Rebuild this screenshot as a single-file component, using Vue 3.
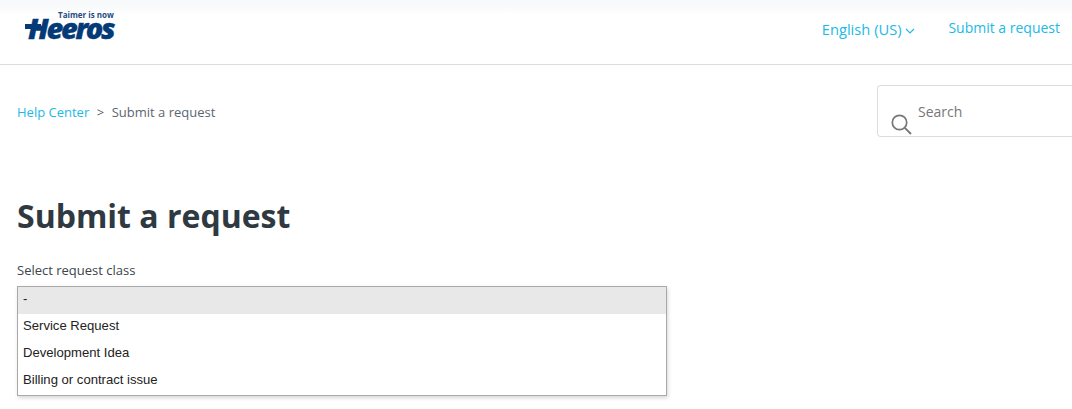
<template>
  <div class="page">
    <header class="topbar">
      <a class="logo">
        <span class="logo-tag">Taimer is now</span>
        <span class="logo-name"><i class="logo-bar"></i>Heeros</span>
      </a>
      <nav class="nav">
        <a class="lang">English (US)
          <svg class="chev" viewBox="0 0 10 6" width="10" height="6"><path d="M1 1l4 4 4-4" fill="none" stroke="currentColor" stroke-width="1.1"/></svg>
        </a>
        <a class="nav-link">Submit a request</a>
      </nav>
    </header>

    <div class="subbar">
      <div class="crumbs">
        <a class="crumb-link">Help Center</a>
        <span class="crumb-sep">&gt;</span>
        <span>Submit a request</span>
      </div>
      <div class="search">
        <svg class="search-icon" viewBox="0 0 22 22" width="22" height="22"><circle cx="9.5" cy="9.5" r="7.2" fill="none" stroke="#777" stroke-width="1.7"/><path d="M14.8 14.8L21 21" fill="none" stroke="#777" stroke-width="1.9"/></svg>
        <span class="search-text">Search</span>
      </div>
    </div>

    <main class="content">
      <h1>Submit a request</h1>
      <label class="field-label">Select request class</label>
      <ul class="listbox" role="listbox">
        <li v-for="(opt, i) in options" :key="opt" role="option" :class="{ selected: i === 0 }">{{ opt }}</li>
      </ul>
    </main>
  </div>
</template>

<script setup>
const options = ['-', 'Service Request', 'Development Idea', 'Billing or contract issue']
</script>

<style>
html, body { margin: 0; background: #fff; overflow: hidden; }
</style>

<style scoped>
.page {
  width: 1072px;
  height: 409px;
  overflow: hidden;
  font-family: "Open Sans", sans-serif;
  color: #555;
}
.topbar {
  height: 64px;
  border-bottom: 1px solid #ddd;
  background: linear-gradient(#f8f9fb 0, #f8f9fb 6px, #fff 14px);
  display: flex;
  justify-content: space-between;
  padding: 0 12px 0 25px;
}
.logo {
  display: flex;
  flex-direction: column;
  padding-top: 12px;
  width: 90px;
}
.logo-tag {
  font: 700 8px/6px "Open Sans", sans-serif;
  color: #1f4a86;
  margin-left: 33px;
  white-space: nowrap;
}
.logo-name {
  position: relative;
  font: italic 800 29px/20px "Open Sans", sans-serif;
  letter-spacing: -2.3px;
  color: #053a78;
  -webkit-text-stroke: 0.3px #053a78;
  padding-left: 3px;
  white-space: nowrap;
}
.logo-bar {
  position: absolute;
  left: 0;
  top: 6px;
  width: 16px;
  height: 5px;
  background: #053a78;
}
.nav {
  display: flex;
  gap: 33px;
}
.lang, .nav-link { color: #21b9e6; white-space: nowrap; }
.lang {
  font-size: 14.7px;
  line-height: 20px;
  padding-top: 19px;
}
.chev { margin-left: 0; vertical-align: 1px; }
.nav-link {
  font-size: 14px;
  line-height: 20px;
  padding-top: 18px;
}
.subbar {
  display: flex;
  justify-content: space-between;
  padding: 20px 0 0 17px;
  height: 51px;
}
.crumbs {
  display: flex;
  gap: 7.5px;
  font-size: 13px;
  line-height: 54px;
  color: #5c6670;
  height: 52px;
}
.crumb-link { color: #21b9e6; }
.search {
  width: 194px;
  height: 50px;
  border: 1px solid #ddd;
  border-right: 0;
  border-radius: 4px 0 0 4px;
  position: relative;
  box-sizing: content-box;
  flex: none;
}
.search-text {
  position: absolute;
  left: 40px;
  top: 16px;
  font-size: 14px;
  line-height: 20px;
  color: #777;
}
.search-icon {
  position: absolute;
  left: 12px;
  top: 27px;
}
.content {
  padding: 0 0 0 17px;
}
h1 {
  margin: 0;
  padding-top: 58px;
  font-size: 32px;
  line-height: 44px;
  font-weight: 700;
  color: #2f3941;
}
.field-label {
  display: block;
  margin-top: 23px;
  font-size: 13px;
  line-height: 18px;
  color: #3c444c;
}
.listbox {
  list-style: none;
  margin: 7px 0 0;
  padding: 0;
  width: 648px;
  border: 1px solid #a9a9a9;
  box-shadow: 1px 2px 4px rgba(0, 0, 0, 0.16);
  font: 13.1px/23px "Liberation Sans", Arial, sans-serif;
  color: #222;
}
.listbox li {
  height: 27px;
  padding-left: 5px;
}
.listbox li.selected { background: #e8e8e8; }
</style>
